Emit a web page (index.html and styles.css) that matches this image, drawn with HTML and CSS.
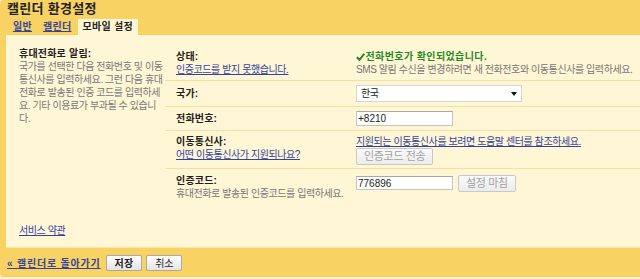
FILE: index.html
```html
<!DOCTYPE html>
<html lang="ko">
<head>
<meta charset="utf-8">
<title>캘린더 환경설정</title>
<link rel="stylesheet" href="styles.css">
</head>
<body>
<div class="app">
  <div class="title">캘린더 환경설정</div>
  <div class="tabs">
    <a class="tab" href="#">일반</a>
    <a class="tab" href="#">캘린더</a>
    <span class="tab active">모바일 설정</span>
  </div>
  <div class="panel">
    <div class="side">
      <div class="bold">휴대전화로 알림:</div>
      <p class="side-text">국가를 선택한 다음 전화번호 및 이동<br>통신사를 입력하세요. 그런 다음 휴대<br>전화로 발송된 인증 코드를 입력하세<br>요. 기타 이용료가 부과될 수 있습니<br>다.</p>
      <a class="side-link" href="#">서비스 약관</a>
    </div>
    <div class="form">
      <div class="row r1">
        <div class="label">
          <div class="bold">상태:</div>
          <a href="#">인증코드를 받지 못했습니다.</a>
        </div>
        <div class="value">
          <div class="ok"><svg class="check" width="9" height="8" viewBox="0 0 9 8"><path d="M0.8 4.2 L3.4 6.8 L8.3 0.8" fill="none" stroke="#1e8a1e" stroke-width="2"/></svg>전화번호가 확인되었습니다.</div>
          <div class="hint">SMS 알림 수신을 변경하려면 새 전화전호와 이동통신사를 입력하세요.</div>
        </div>
      </div>
      <div class="row r2">
        <div class="label"><div class="bold">국가:</div></div>
        <div class="value">
          <div class="select"><span>한국</span><span class="arrow"></span></div>
        </div>
      </div>
      <div class="row r3">
        <div class="label"><div class="bold">전화번호:</div></div>
        <div class="value"><input class="field" type="text" value="+8210"></div>
      </div>
      <div class="row r4">
        <div class="label">
          <div class="bold">이동통신사:</div>
          <a href="#">어떤 이동통신사가 지원되나요?</a>
        </div>
        <div class="value">
          <a href="#">지원되는 이동통신사를 보려면 도움말 센터를 참조하세요.</a>
          <div><button class="btn big" disabled>인증코드 전송</button></div>
        </div>
      </div>
      <div class="row r5">
        <div class="label">
          <div class="bold">인증코드:</div>
          <div class="hint">휴대전화로 발송된 인증코드를 입력하세요.</div>
        </div>
        <div class="value inline">
          <input class="field code" type="text" value="776896">
          <button class="btn big" disabled>설정 마침</button>
        </div>
      </div>
    </div>
  </div>
  <div class="footer">
    <a class="back" href="#">« 캘린더로 돌아가기</a>
    <button class="btn save">저장</button>
    <button class="btn cancel">취소</button>
  </div>
</div>
</body>
</html>
```
FILE: styles.css
```css
html, body {
  margin: 0;
  padding: 0;
}
body {
  background: #fdf3d3;
  font-family: "Liberation Sans", "Noto Sans CJK KR", sans-serif;
  font-size: 10px;
  letter-spacing: -0.42px;
  color: #222;
}
a {
  color: #33449e;
  text-decoration: underline;
}
.app {
  background: #f9d264;
  height: 277px;
  border-radius: 4px 0 0 4px;
  display: flex;
  flex-direction: column;
  overflow: hidden;
}
.title {
  height: 17px;
  line-height: 17px;
  padding-left: 7px;
  font-size: 13px;
  font-weight: bold;
  letter-spacing: 0.3px;
  color: #222;
}
.tabs {
  display: flex;
  gap: 1px;
  height: 18px;
  padding-left: 8px;
}
.tab {
  margin-top: 2px;
  padding: 0 5px;
  height: 16px;
  line-height: 16px;
  font-weight: bold;
  letter-spacing: 0.3px;
}
.tab.active {
  background: #fff6d6;
  color: #222;
}
.panel {
  margin-left: 6px;
  height: 212px;
  background: #fff6d6;
  border-bottom: 1px solid #fbe6a2;
  display: flex;
}
.bold {
  font-weight: bold;
  letter-spacing: 0.2px;
  color: #222;
}
.side {
  width: 146px;
  flex: none;
  padding: 12px 0 10px 13px;
  display: flex;
  flex-direction: column;
  line-height: 13px;
}
.side-text {
  margin: 0;
  color: #777;
  white-space: nowrap;
}
.side-link {
  margin-top: auto;
  align-self: flex-start;
}
.form {
  flex: 1;
  padding-top: 8px;
}
.row {
  display: flex;
  border-bottom: 1px solid #f5e0a0;
  line-height: 13px;
}
.row:last-child {
  border-bottom: none;
}
.label {
  width: 180px;
  flex: none;
  padding-left: 11px;
}
.value {
  flex: 1;
  white-space: nowrap;
}
.r1 { padding: 7px 0 4px; }
.r2 { padding: 4px 0; align-items: center; }
.r3 { padding: 4px 0; align-items: center; }
.r4 { padding: 4px 0 3px; }
.r5 { padding: 5px 0; }
.ok {
  color: #1e8a1e;
  font-weight: bold;
  letter-spacing: 0.4px;
  display: flex;
  align-items: center;
}
.check {
  margin-right: 0.5px;
}
.hint {
  color: #777;
}
.select {
  width: 166px;
  height: 17px;
  box-sizing: border-box;
  border: 1px solid #d4d4d4;
  background: #fff;
  padding: 0 3px 0 4px;
  display: flex;
  align-items: center;
  justify-content: space-between;
  color: #222;
}
.arrow {
  width: 0;
  height: 0;
  border-left: 3px solid transparent;
  border-right: 3px solid transparent;
  border-top: 4px solid #111;
  margin-right: 1px;
}
.field {
  width: 97px;
  height: 15px;
  box-sizing: border-box;
  margin: 0;
  padding: 0 1px;
  border: 1px solid #c4c4c4;
  border-top-color: #a8a8a8;
  background: #fff;
  font-family: "Liberation Sans", sans-serif;
  font-size: 10px;
  letter-spacing: 0;
  color: #222;
  display: block;
}
.btn {
  height: 17px;
  box-sizing: border-box;
  margin: 0;
  padding: 0 8px;
  border: 1px solid #a9a9a9;
  border-radius: 2px;
  background: linear-gradient(#fdfdfd, #e4e4e4);
  font-family: "Liberation Sans", "Noto Sans CJK KR", sans-serif;
  font-size: 10px;
  letter-spacing: -0.35px;
  line-height: 15px;
  color: #222;
}
.btn.big {
  font-size: 11px;
  padding: 0 7px;
}
.btn:disabled {
  color: #a0a0a0;
  border-color: #c8c8c8;
  background: linear-gradient(#fafafa, #ececec);
}
.inline {
  display: flex;
  align-items: flex-start;
  gap: 5px;
  padding-top: 1px;
}
.code {
  margin-top: 1px;
  height: 14px;
}
.footer {
  flex: 1;
  display: flex;
  align-items: center;
  padding-left: 7px;
}
.back {
  font-weight: bold;
  letter-spacing: 0.8px;
  margin-right: 5px;
}
.save {
  font-weight: bold;
  letter-spacing: 0.2px;
  margin-right: 4px;
  height: 16px;
}
.cancel {
  height: 16px;
}
```
